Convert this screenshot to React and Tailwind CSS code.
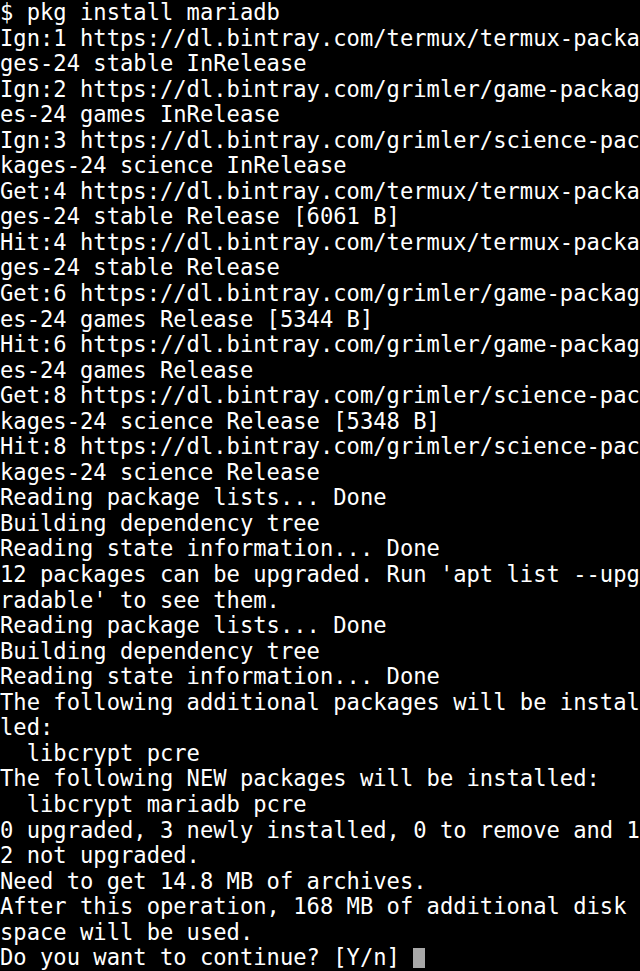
const lines = [
  "$ pkg install mariadb",
  "Ign:1 https://dl.bintray.com/termux/termux-packa",
  "ges-24 stable InRelease",
  "Ign:2 https://dl.bintray.com/grimler/game-packag",
  "es-24 games InRelease",
  "Ign:3 https://dl.bintray.com/grimler/science-pac",
  "kages-24 science InRelease",
  "Get:4 https://dl.bintray.com/termux/termux-packa",
  "ges-24 stable Release [6061 B]",
  "Hit:4 https://dl.bintray.com/termux/termux-packa",
  "ges-24 stable Release",
  "Get:6 https://dl.bintray.com/grimler/game-packag",
  "es-24 games Release [5344 B]",
  "Hit:6 https://dl.bintray.com/grimler/game-packag",
  "es-24 games Release",
  "Get:8 https://dl.bintray.com/grimler/science-pac",
  "kages-24 science Release [5348 B]",
  "Hit:8 https://dl.bintray.com/grimler/science-pac",
  "kages-24 science Release",
  "Reading package lists... Done",
  "Building dependency tree",
  "Reading state information... Done",
  "12 packages can be upgraded. Run 'apt list --upg",
  "radable' to see them.",
  "Reading package lists... Done",
  "Building dependency tree",
  "Reading state information... Done",
  "The following additional packages will be instal",
  "led:",
  "  libcrypt pcre",
  "The following NEW packages will be installed:",
  "  libcrypt mariadb pcre",
  "0 upgraded, 3 newly installed, 0 to remove and 1",
  "2 not upgraded.",
  "Need to get 14.8 MB of archives.",
  "After this operation, 168 MB of additional disk",
  "space will be used.",
];

export default function App() {
  return (
    <div className="w-[640px] h-[971px] bg-black overflow-hidden font-['DejaVu_Sans_Mono',monospace] text-[22.15px] text-white">
      {lines.map((line, i) => (
        <div key={i} className="h-[25.55px] leading-[25.55px] whitespace-pre">
          {line}
        </div>
      ))}
      <div className="h-[25.55px] leading-[25.55px] whitespace-pre flex items-center">
        <span>Do you want to continue? [Y/n] </span>
        <span className="inline-block w-[12px] h-[20px] bg-[#a8a8a8]" />
      </div>
    </div>
  );
}
